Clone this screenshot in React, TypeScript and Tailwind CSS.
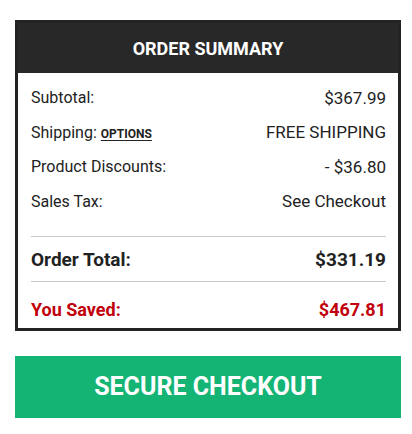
export default function App() {
    const rows = [
        { label: 'Subtotal:', value: '$367.99' },
        { label: 'Shipping:', value: 'FREE SHIPPING', link: 'OPTIONS' },
        { label: 'Product Discounts:', value: '- $36.80' },
        { label: 'Sales Tax:', value: 'See Checkout' },
    ]

    return (
        <div className="min-h-[434px] bg-white pl-[15px] pr-[11px] pt-[20px] font-['Roboto',sans-serif] text-[#222]">
            {/* Summary card */}
            <div className="border-[3px] border-[#232323]">
                <div className="flex h-[50px] items-center justify-center bg-[#282828]">
                    <h2 className="text-[18px] font-bold text-white">ORDER SUMMARY</h2>
                </div>
                <div className="pl-[13px] pr-[12px] pt-[8px]">
                    {rows.map(r => (
                        <div key={r.label} className="flex h-[34.5px] items-center justify-between">
                            <span className="text-[16px]">
                                {r.label}
                                {r.link && (
                                    <a href="#" className="ml-[4px] text-[12px] font-bold underline underline-offset-2">
                                        {r.link}
                                    </a>
                                )}
                            </span>
                            <span className="text-[17px]">{r.value}</span>
                        </div>
                    ))}
                    <div className="mt-[17px] h-px bg-[#c9c9c9]" />
                    <div className="flex h-[44px] items-center justify-between pt-[3px] text-[19px] font-bold">
                        <span>Order Total:</span>
                        <span>$331.19</span>
                    </div>
                    <div className="h-px bg-[#c9c9c9]" />
                    <div className="flex h-[46px] items-center justify-between pt-[8px] text-[18px] font-bold text-[#c1000b]">
                        <span>You Saved:</span>
                        <span>$467.81</span>
                    </div>
                </div>
            </div>

            {/* Checkout button */}
            <button className="mt-[25px] flex h-[62px] w-full items-center justify-center bg-[#14b475] text-[25px] font-bold text-white">
                SECURE CHECKOUT
            </button>
        </div>
    )
}
